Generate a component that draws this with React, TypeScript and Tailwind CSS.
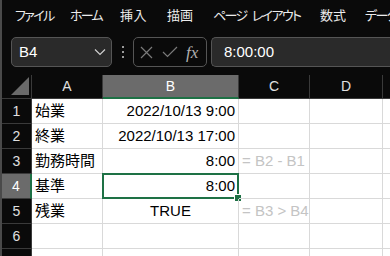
import React from "react";

const jp = { fontFamily: '"Noto Sans CJK JP", "Noto Sans", sans-serif' };
const cellFont = { fontFamily: '"Liberation Sans", "Noto Sans CJK JP", sans-serif' };

const menu: { label: React.ReactNode; key: string; w: string; t: string }[] = [
  { key: "file", label: "ファイル", w: "w-[55px]", t: "tracking-[-1.6px]" },
  { key: "home", label: "ホーム", w: "w-[50px]", t: "tracking-[-1.8px]" },
  { key: "insert", label: "挿入", w: "w-[47px]", t: "tracking-[0.5px]" },
  { key: "draw", label: "描画", w: "w-[46px]", t: "tracking-[0px]" },
  {
    key: "layout",
    label: (
      <>
        ページ<span className="ml-[5px]">レイアウト</span>
      </>
    ),
    w: "w-[107px]",
    t: "tracking-[-1.6px]",
  },
  { key: "formula", label: "数式", w: "w-[45px]", t: "tracking-[0px]" },
  { key: "data", label: "データ", w: "w-[60px]", t: "tracking-[-1.6px]" },
];

function Corner() {
  return (
    <div className="relative bg-[#0a0a0a] border-r border-b border-[#3a3a3a]">
      <svg className="absolute left-[9px] top-[2px]" width="18" height="18" viewBox="0 0 18 18">
        <polygon points="0,18 18,18 18,0" fill="#6a6a6a" />
      </svg>
    </div>
  );
}

function ColHead({ label, selected }: { label: string; selected?: boolean }) {
  return (
    <div
      className={
        "flex items-center justify-center text-[14px] border-r border-[#3a3a3a] " +
        (selected
          ? "bg-[#6b6b6b] text-white border-b-2 border-b-[#1e7145]"
          : "bg-[#0a0a0a] text-[#e0e0e0] border-b border-b-[#3a3a3a]")
      }
      style={cellFont}
    >
      {label}
    </div>
  );
}

function RowHead({ n, selected }: { n: string; selected?: boolean }) {
  return (
    <div
      className={
        "flex items-center justify-center text-[14px] border-b border-[#3a3a3a] " +
        (selected
          ? "bg-[#6b6b6b] text-white border-r-2 border-r-[#1e7145]"
          : "bg-[#0a0a0a] text-[#e0e0e0] border-r border-r-[#3a3a3a]")
      }
      style={cellFont}
    >
      {n}
    </div>
  );
}

function Cell({
  children,
  align = "left",
  muted,
  selected,
}: {
  children?: React.ReactNode;
  align?: "left" | "right" | "center";
  muted?: boolean;
  selected?: boolean;
}) {
  const a =
    align === "right" ? "justify-end pr-[3px]" : align === "center" ? "justify-center" : "justify-start pl-[3px]";
  return (
    <div
      className={
        "relative flex items-center whitespace-nowrap text-[15px] border-r border-b border-[#d9d9d9] " +
        a +
        (muted ? " text-[#c4c4c4]" : " text-black")
      }
      style={cellFont}
    >
      {children}
      {selected && (
        <>
          <div className="absolute left-[-1px] top-[-1px] right-[-1px] bottom-[-1px] border-2 border-[#1e7145]" />
          <div className="absolute right-[-4px] bottom-[-4px] w-[6px] h-[6px] bg-[#1e7145] border border-white box-content" />
        </>
      )}
    </div>
  );
}

export default function App() {
  const rows: [string, string, string, string, boolean][] = [
    ["1", "始業", "2022/10/13 9:00", "", false],
    ["2", "終業", "2022/10/13 17:00", "", false],
    ["3", "勤務時間", "8:00", "= B2 - B1", false],
    ["4", "基準", "8:00", "", true],
    ["5", "残業", "TRUE", "= B3 > B4", false],
    ["6", "", "", "", false],
    ["", "", "", "", false],
  ];
  return (
    <div className="w-[390px] h-[256px] overflow-hidden bg-[#0a0a0a] flex">
      <div className="w-[2px] shrink-0 bg-[#4a4a4a]" />
      <div className="flex-1 flex flex-col min-w-0">
        {/* menu */}
        <div
          className="h-[30px] shrink-0 flex items-center pl-[13px] text-[13px] text-[#ececec] whitespace-nowrap overflow-hidden"
          style={{ ...jp, fontFeatureSettings: '"palt"' }}
        >
          {menu.map((m) => (
            <span key={m.key} className={"shrink-0 " + m.w + " " + m.t}>
              {m.label}
            </span>
          ))}
        </div>
        {/* formula bar */}
        <div className="h-[30px] mt-[7px] shrink-0 flex items-stretch pl-[9px]">
          <div className="w-[101px] shrink-0 rounded-[5px] border border-[#555] bg-[#2a2a2a] flex items-center justify-between pl-[7px] pr-[5px]">
            <span className="text-[15px] text-white" style={cellFont}>
              B4
            </span>
            <svg width="12" height="8" viewBox="0 0 12 8">
              <path d="M1 1.5 L6 6.5 L11 1.5" stroke="#cfcfcf" strokeWidth="1.2" fill="none" />
            </svg>
          </div>
          <div className="w-[21px] shrink-0 flex flex-col items-center justify-center gap-[3px]">
            <div className="w-[2px] h-[2px] bg-[#9a9a9a]" />
            <div className="w-[2px] h-[2px] bg-[#9a9a9a]" />
            <div className="w-[2px] h-[2px] bg-[#9a9a9a]" />
          </div>
          <div className="w-[74px] shrink-0 rounded-[5px] border border-[#555] bg-[#0a0a0a] flex items-center pl-[6px] gap-[9px]">
            <svg width="13" height="13" viewBox="0 0 13 13">
              <path d="M1 1 L12 12 M12 1 L1 12" stroke="#7a7a7a" strokeWidth="1.2" fill="none" />
            </svg>
            <svg width="16" height="12" viewBox="0 0 16 12">
              <path d="M1 6 L5.5 10.5 L15 1" stroke="#7a7a7a" strokeWidth="1.2" fill="none" />
            </svg>
            <span
              className="text-[17px] italic text-[#b0b0b0] leading-none -ml-[1px]"
              style={{ fontFamily: '"Liberation Serif", "DejaVu Serif", serif' }}
            >
              fx
            </span>
          </div>
          <div className="flex-1 ml-[4px] rounded-l-[5px] border border-r-0 border-[#555] bg-[#2a2a2a] flex items-center pl-[12px]">
            <span className="text-[15px] text-white" style={cellFont}>
              8:00:00
            </span>
          </div>
        </div>
        {/* grid */}
        <div className="mt-[8px] grid grid-cols-[30px_71px_136px_71px_73px_1fr] grid-rows-[24px_repeat(7,25px)] bg-white">
          <Corner />
          <ColHead label="A" />
          <ColHead label="B" selected />
          <ColHead label="C" />
          <ColHead label="D" />
          <div className="bg-[#0a0a0a] border-b border-[#3a3a3a]" />
          {rows.map((r, i) => (
            <React.Fragment key={i}>
              <RowHead n={r[0]} selected={r[4]} />
              <Cell>{r[1]}</Cell>
              <Cell align={r[2] === "TRUE" ? "center" : "right"} selected={r[4]}>
                {r[2]}
              </Cell>
              <Cell muted>{r[3]}</Cell>
              <Cell />
              <div className="border-b border-[#d9d9d9]" />
            </React.Fragment>
          ))}
        </div>
      </div>
    </div>
  );
}
